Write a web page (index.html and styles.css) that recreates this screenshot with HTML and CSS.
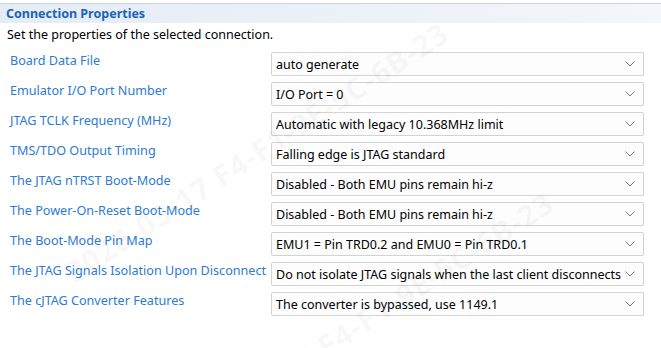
FILE: index.html
```html
<!DOCTYPE html>
<html lang="en">
<head>
    <meta charset="UTF-8">
    <title>Connection Properties</title>
    <link rel="stylesheet" href="styles.css">
</head>
<body>
    <div class="panel">
        <div class="section-title">Connection Properties</div>
        <p class="description">Set the properties of the selected connection.</p>

        <div class="props">
            <div class="prop-label">Board Data File</div>
            <div class="combo"><span>auto generate</span><svg class="chevron" width="10" height="6" viewBox="0 0 10 6"><path d="M0.5 0.5 L5 5 L9.5 0.5" fill="none" stroke="#7a7a7a" stroke-width="1"/></svg></div>

            <div class="prop-label">Emulator I/O Port Number</div>
            <div class="combo"><span>I/O Port = 0</span><svg class="chevron" width="10" height="6" viewBox="0 0 10 6"><path d="M0.5 0.5 L5 5 L9.5 0.5" fill="none" stroke="#7a7a7a" stroke-width="1"/></svg></div>

            <div class="prop-label">JTAG TCLK Frequency (MHz)</div>
            <div class="combo"><span>Automatic with legacy 10.368MHz limit</span><svg class="chevron" width="10" height="6" viewBox="0 0 10 6"><path d="M0.5 0.5 L5 5 L9.5 0.5" fill="none" stroke="#7a7a7a" stroke-width="1"/></svg></div>

            <div class="prop-label">TMS/TDO Output Timing</div>
            <div class="combo"><span>Falling edge is JTAG standard</span><svg class="chevron" width="10" height="6" viewBox="0 0 10 6"><path d="M0.5 0.5 L5 5 L9.5 0.5" fill="none" stroke="#7a7a7a" stroke-width="1"/></svg></div>

            <div class="prop-label">The JTAG nTRST Boot-Mode</div>
            <div class="combo"><span>Disabled - Both EMU pins remain hi-z</span><svg class="chevron" width="10" height="6" viewBox="0 0 10 6"><path d="M0.5 0.5 L5 5 L9.5 0.5" fill="none" stroke="#7a7a7a" stroke-width="1"/></svg></div>

            <div class="prop-label">The Power-On-Reset Boot-Mode</div>
            <div class="combo"><span>Disabled - Both EMU pins remain hi-z</span><svg class="chevron" width="10" height="6" viewBox="0 0 10 6"><path d="M0.5 0.5 L5 5 L9.5 0.5" fill="none" stroke="#7a7a7a" stroke-width="1"/></svg></div>

            <div class="prop-label">The Boot-Mode Pin Map</div>
            <div class="combo"><span>EMU1 = Pin TRD0.2 and EMU0 = Pin TRD0.1</span><svg class="chevron" width="10" height="6" viewBox="0 0 10 6"><path d="M0.5 0.5 L5 5 L9.5 0.5" fill="none" stroke="#7a7a7a" stroke-width="1"/></svg></div>

            <div class="prop-label">The JTAG Signals Isolation Upon Disconnect</div>
            <div class="combo"><span>Do not isolate JTAG signals when the last client disconnects</span><svg class="chevron" width="10" height="6" viewBox="0 0 10 6"><path d="M0.5 0.5 L5 5 L9.5 0.5" fill="none" stroke="#7a7a7a" stroke-width="1"/></svg></div>

            <div class="prop-label">The cJTAG Converter Features</div>
            <div class="combo"><span>The converter is bypassed, use 1149.1</span><svg class="chevron" width="10" height="6" viewBox="0 0 10 6"><path d="M0.5 0.5 L5 5 L9.5 0.5" fill="none" stroke="#7a7a7a" stroke-width="1"/></svg></div>
        </div>

        <!-- faint watermark over the page -->
        <div class="watermark wm-one">2026-03-17 F4-F1-9E-5C-6B-23</div>
        <div class="watermark wm-two">2026-03-17 F4-F1-9E-5C-6B-23</div>
    </div>
</body>
</html>
```

FILE: styles.css
```css
body {
    margin: 0;
    padding: 0;
    background-color: #ffffff;
    font-family: "Noto Sans", "Open Sans", sans-serif;
    font-size: 12.5px;
    color: #000;
    overflow: hidden;
}
.panel {
    position: relative;
    width: 661px;
    height: 348px;
    padding-top: 3px;
    box-sizing: border-box;
    overflow: hidden;
}
.section-title {
    height: 19px;
    line-height: 19px;
    padding-left: 6px;
    border-top: 1px solid #c9d4e0;
    background: linear-gradient(to right, #e4ecf6, #f3f6fa);
    color: #1b63b9;
    font-weight: bold;
    font-size: 12.5px;
}
.description {
    margin: 0;
    padding: 3px 0 0 7px;
    line-height: 18px;
}
.props {
    display: grid;
    grid-template-columns: 271px 373px;
    grid-auto-rows: 24px;
    row-gap: 6px;
    margin-top: 8px;
}
.prop-label {
    padding-left: 10px;
    line-height: 17px;
    font-size: 12.6px;
    color: #2c7bd5;
    white-space: nowrap;
}
.combo {
    display: flex;
    align-items: center;
    justify-content: space-between;
    border: 1px solid #d2d2d2;
    border-radius: 2px;
    background-color: #fdfdfd;
    padding: 0 8px 0 4px;
    white-space: nowrap;
}
.chevron {
    flex: none;
}
.watermark {
    position: absolute;
    height: 40px;
    line-height: 40px;
    font-size: 30px;
    font-weight: bold;
    letter-spacing: 1px;
    white-space: nowrap;
    color: rgba(0, 0, 0, 0.045);
    transform: rotate(-33deg);
    transform-origin: right center;
    pointer-events: none;
}
.wm-one {
    right: 216px;
    top: 10px;
}
.wm-two {
    right: 111px;
    top: 180px;
}
```
